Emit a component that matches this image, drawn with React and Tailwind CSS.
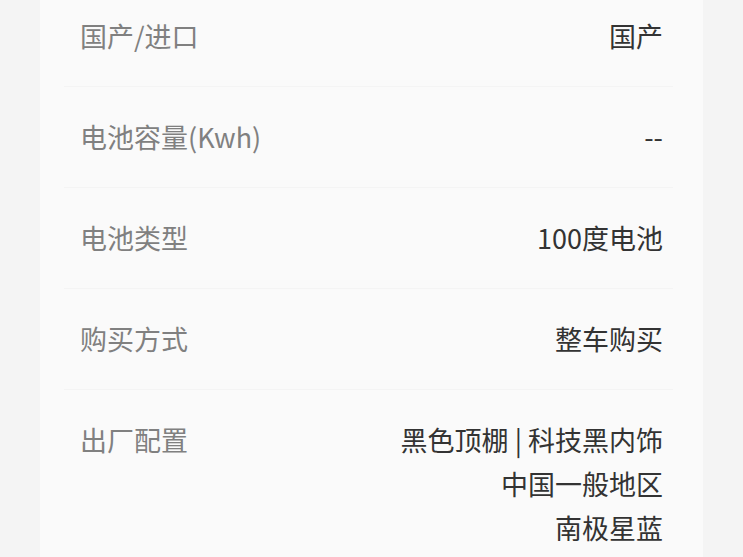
const rows = [
  { label: '国产/进口', value: ['国产'] },
  { label: '电池容量(Kwh)', value: ['--'] },
  { label: '电池类型', value: ['100度电池'] },
  { label: '购买方式', value: ['整车购买'] },
  { label: '出厂配置', value: ['黑色顶棚 | 科技黑内饰', '中国一般地区', '南极星蓝', '基础辅助驾驶'] },
];

export default function App() {
  return (
    <div
      className="w-[743px] h-[557px] overflow-hidden bg-[#f4f4f4]"
      style={{ fontFamily: '"Noto Sans CJK SC", "Noto Sans", sans-serif' }}
    >
      <div className="mx-[40px] h-full flex flex-col bg-[#fafafa] pl-[24px] pr-[30px]">
        <div className="-mt-[14px]">
          {rows.map((row) => (
            <div
              key={row.label}
              className="flex justify-between pl-[16px] pr-[10px] py-[28px] border-b border-[#f4f4f4] text-[27px] leading-[44px]"
            >
              <div className="text-[#808080] whitespace-nowrap">{row.label}</div>
              <div className="text-right text-[#333333]">
                {row.value.map((v) => (
                  <div key={v} className="whitespace-nowrap">{v}</div>
                ))}
              </div>
            </div>
          ))}
        </div>
      </div>
    </div>
  );
}
